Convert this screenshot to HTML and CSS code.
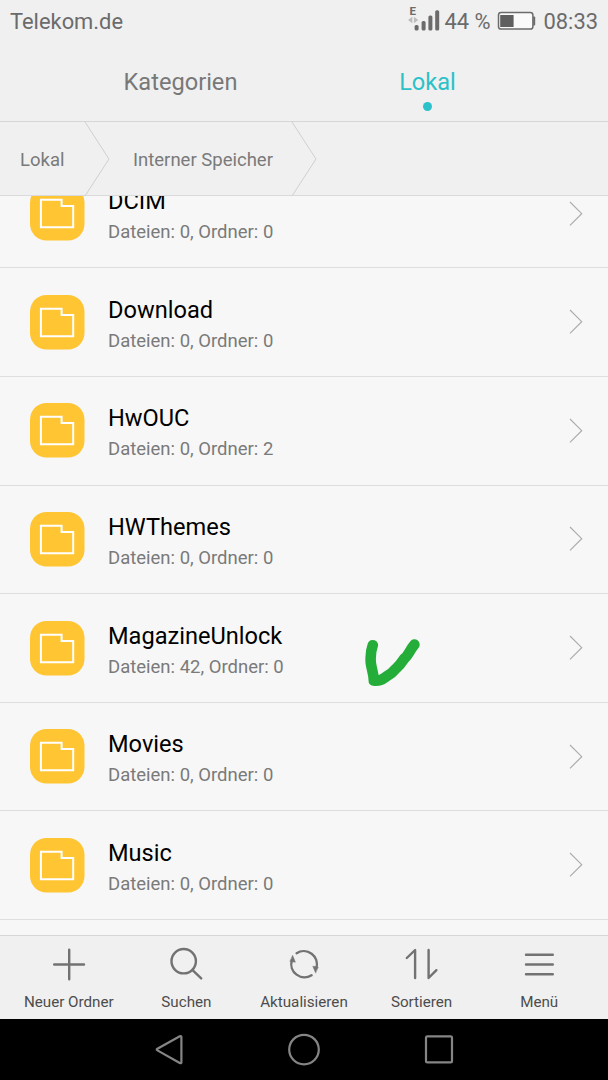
FILE: index.html
```html
<!DOCTYPE html>
<html lang="de">
<head>
<meta charset="utf-8">
<title>Dateien</title>
<link rel="stylesheet" href="styles.css">
</head>
<body>
<svg class="defs" width="0" height="0">
  <symbol id="folder" viewBox="0 0 55 55">
    <rect width="54.5" height="54.5" rx="16.5" fill="#ffc533"/>
    <path d="M10.9 13.7H31.6V20H43.2V41.3H10.9Z" fill="none" stroke="#fff" stroke-width="2"/>
  </symbol>
  <symbol id="chevron" viewBox="0 0 14 26">
    <path d="M1 1L12.7 12.7L1 24.4" fill="none" stroke="#adadad" stroke-width="1.2"/>
  </symbol>
  <symbol id="crumb" viewBox="0 0 26 74">
    <path d="M1 0L25 37L1 74" fill="none" stroke="#cfcfcf" stroke-width="1"/>
  </symbol>
</svg>
<div class="phone">
  <header class="status">
    <span class="carrier">Telekom.de</span>
    <svg class="signal" width="32" height="28" viewBox="0 0 32 28">
      <text class="edge" x="1.6" y="11.3">E</text>
      <path d="M4.3 9.8V16.2L0 13ZM5.9 9.8V16.2L10.2 13Z" fill="#bdbdbd" transform="translate(0 3)"/>
      <g fill="#6b6b6b"><rect x="6.6" y="21" width="4" height="5.6" rx="1.6"/><rect x="13.6" y="17" width="4" height="9.6" rx="1.6"/><rect x="20.4" y="11.4" width="4" height="15.2" rx="1.6"/><rect x="27.2" y="6.2" width="4" height="20.4" rx="1.6"/></g>
    </svg>
    <span class="percent">44 %</span>
    <svg class="battery" width="39" height="20" viewBox="0 0 39 20">
      <rect x="1.5" y="1.6" width="34.4" height="16.4" rx="2.6" fill="#fafafa" stroke="#6b6b6b" stroke-width="1.5"/>
      <rect x="3.2" y="4" width="13.4" height="12" fill="#5f5f5f"/>
      <path d="M36.2 5.4H37.2Q38.2 5.4 38.2 6.4V13.4Q38.2 14.4 37.2 14.4H36.2Z" fill="#6b6b6b"/>
    </svg>
    <span class="clock">08:33</span>
  </header>
  <nav class="tabs">
    <div class="tab">Kategorien</div>
    <div class="tab active">Lokal<i class="dot"></i></div>
  </nav>
  <div class="crumbs">
    <span class="crumb-a">Lokal</span><svg class="crumb-sep"><use href="#crumb"/></svg>
    <span class="crumb-b">Interner Speicher</span><svg class="crumb-sep"><use href="#crumb"/></svg>
  </div>
  <main class="list">
    <div class="row"><svg class="folder"><use href="#folder"/></svg><div class="info"><div class="name">DCIM</div><div class="sub">Dateien: 0, Ordner: 0</div></div><svg class="chev"><use href="#chevron"/></svg></div>
    <div class="row"><svg class="folder"><use href="#folder"/></svg><div class="info"><div class="name">Download</div><div class="sub">Dateien: 0, Ordner: 0</div></div><svg class="chev"><use href="#chevron"/></svg></div>
    <div class="row"><svg class="folder"><use href="#folder"/></svg><div class="info"><div class="name">HwOUC</div><div class="sub">Dateien: 0, Ordner: 2</div></div><svg class="chev"><use href="#chevron"/></svg></div>
    <div class="row"><svg class="folder"><use href="#folder"/></svg><div class="info"><div class="name">HWThemes</div><div class="sub">Dateien: 0, Ordner: 0</div></div><svg class="chev"><use href="#chevron"/></svg></div>
    <div class="row marked"><svg class="folder"><use href="#folder"/></svg><div class="info"><div class="name">MagazineUnlock</div><div class="sub">Dateien: 42, Ordner: 0</div></div>
      <svg class="mark" width="56" height="50" viewBox="0 0 56 50"><path d="M8.8 7.2C6.6 13 6.4 20 6.8 25C7.6 31 9.8 36 9.8 42.6C16 43.6 19 41 22 38.8C27 36.2 29 34.5 32 30.6C36 27 38 24 40.2 20.7C45 17 45 13 50.4 6.6" fill="none" stroke="#25ad3a" stroke-width="10.6" stroke-linecap="round" stroke-linejoin="round"/></svg>
      <svg class="chev"><use href="#chevron"/></svg></div>
    <div class="row"><svg class="folder"><use href="#folder"/></svg><div class="info"><div class="name">Movies</div><div class="sub">Dateien: 0, Ordner: 0</div></div><svg class="chev"><use href="#chevron"/></svg></div>
    <div class="row"><svg class="folder"><use href="#folder"/></svg><div class="info"><div class="name">Music</div><div class="sub">Dateien: 0, Ordner: 0</div></div><svg class="chev"><use href="#chevron"/></svg></div>
  </main>
  <footer class="tools">
    <div class="tool"><svg class="icon" viewBox="0 0 36 36"><path d="M18.2 3.7V33.3M3.2 18.5H33"/></svg>Neuer Ordner</div>
    <div class="tool"><svg class="icon" viewBox="0 0 36 36"><circle cx="15.7" cy="15.2" r="12.2"/><path d="M24.3 23.9L33.2 32.4"/></svg>Suchen</div>
    <div class="tool"><svg class="icon" viewBox="0 0 36 36"><path d="M10.6 7.2A13.2 13.2 0 0 1 30.4 22M25.6 29.2A13.2 13.2 0 0 1 5.8 14.4"/><path class="solid" d="M6.7 9.6L9.4 16.2L4.2 15.4ZM29.5 26.8L26.8 20.2L32 21Z"/></svg>Aktualisieren</div>
    <div class="tool"><svg class="icon" viewBox="0 0 36 36"><path d="M2.8 12L11.1 4V32M24.6 4V32L32.4 24.2"/></svg>Sortieren</div>
    <div class="tool"><svg class="icon" viewBox="0 0 36 36"><path d="M5 8.8H31.8M5 18.5H31.8M5 28.2H31.8"/></svg>Menü</div>
  </footer>
  <div class="navbar">
    <svg class="nav" viewBox="0 0 36 36"><path d="M28.8 5.2Q30.4 4.6 30.4 6.2V31.2Q30.4 32.8 28.8 32L6.4 19.4Q5 18.6 6.4 17.8Z"/></svg>
    <svg class="nav" viewBox="0 0 36 36"><circle cx="18" cy="18.6" r="14.8"/></svg>
    <svg class="nav" viewBox="0 0 36 36"><rect x="5" y="5.4" width="26" height="26" rx="1.4"/></svg>
  </div>
</div>
</body>
</html>
```
FILE: styles.css
```css
* { box-sizing: border-box; }
body { margin: 0; background: #f7f7f7; font-family: Roboto, "Liberation Sans", sans-serif; }
svg { display: block; flex: none; }
.defs { position: absolute; }
.phone { width: 608px; height: 1080px; display: flex; flex-direction: column; overflow: hidden; }

.status { height: 42px; flex: none; display: flex; background: #f0f0f0; color: #6b6b6b; font-size: 21.9px; line-height: 43px; padding: 0 10px; }
.carrier { flex: 1; }
.signal { margin: 4px 4px 0 0; }
.edge { font-size: 11.5px; font-weight: 700; fill: #6b6b6b; }
.battery { margin: 11px 7px 0 7px; }

.tabs { height: 80px; flex: none; display: flex; background: #f0f0f0; border-bottom: 1px solid #d6d6d6; padding: 0 57px; }
.tab { flex: 1; text-align: center; color: #787878; font-size: 23.6px; line-height: 80px; }
.tab.active { position: relative; color: #2cc1c8; }
.dot { position: absolute; left: 50%; top: 60px; width: 9px; height: 9px; margin-left: -4.5px; border-radius: 50%; background: #2cc1c8; }

.crumbs { height: 74px; flex: none; display: flex; background: #f0f0f0; border-bottom: 1px solid #dadada; color: #7a7a7a; font-size: 18.5px; line-height: 76px; }
.crumb-a { width: 84px; padding-left: 20px; }
.crumb-b { width: 181px; padding-left: 23px; }
.crumb-sep { width: 26px; height: 74px; }

.list { flex: 1; min-height: 0; overflow: hidden; display: flex; flex-direction: column; justify-content: flex-end; background: #f7f7f7; padding-bottom: 15px; }
.row { height: 108.6px; flex: none; display: flex; align-items: center; border-bottom: 1px solid #dedede; padding: 0 25px 0 30px; }
.folder { width: 55px; height: 55px; margin-right: 23px; }
.info { flex: 1; padding-top: 6px; }
.name { font-size: 23.6px; line-height: 32px; color: #000; }
.sub { font-size: 18.5px; line-height: 31px; color: #7a7a7a; }
.chev { width: 14px; height: 26px; }
.mark { margin: 29px 149px 0 0; }

.tools { height: 84px; flex: none; display: flex; background: #f0f0f0; border-top: 1px solid #d6d6d6; padding: 10px 10px 0; color: #4c4c4c; font-size: 15.2px; }
.tool { flex: 1; display: flex; flex-direction: column; align-items: center; line-height: 20px; white-space: nowrap; }
.icon { width: 36px; height: 36px; margin-bottom: 10px; fill: none; stroke: #727272; stroke-width: 2.4; stroke-linecap: round; stroke-linejoin: round; }
.icon .solid { fill: #727272; stroke-width: .5; }

.navbar { height: 61px; flex: none; display: flex; justify-content: center; gap: 99px; padding-top: 12px; background: #000; }
.nav { width: 36px; height: 36px; fill: none; stroke: #858585; stroke-width: 2.2; stroke-linejoin: round; }
```
